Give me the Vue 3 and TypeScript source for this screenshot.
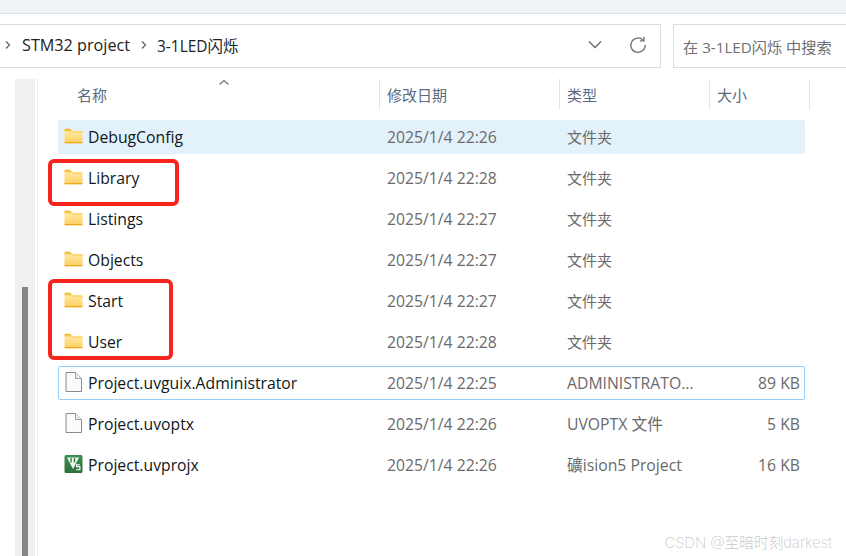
<script setup lang="ts">
interface Row { name: string; date: string; type: string; size: string; icon: 'folder' | 'file' | 'keil'; state?: string }
const rows: Row[] = [
  { name: 'DebugConfig', date: '2025/1/4 22:26', type: '文件夹', size: '', icon: 'folder', state: 'hover' },
  { name: 'Library', date: '2025/1/4 22:28', type: '文件夹', size: '', icon: 'folder' },
  { name: 'Listings', date: '2025/1/4 22:27', type: '文件夹', size: '', icon: 'folder' },
  { name: 'Objects', date: '2025/1/4 22:27', type: '文件夹', size: '', icon: 'folder' },
  { name: 'Start', date: '2025/1/4 22:27', type: '文件夹', size: '', icon: 'folder' },
  { name: 'User', date: '2025/1/4 22:28', type: '文件夹', size: '', icon: 'folder' },
  { name: 'Project.uvguix.Administrator', date: '2025/1/4 22:25', type: 'ADMINISTRATO...', size: '89 KB', icon: 'file', state: 'focus' },
  { name: 'Project.uvoptx', date: '2025/1/4 22:26', type: 'UVOPTX 文件', size: '5 KB', icon: 'file' },
  { name: 'Project.uvprojx', date: '2025/1/4 22:26', type: '礦ision5 Project', size: '16 KB', icon: 'keil' }
]
</script>

<template>
  <div class="page">
    <div class="band"></div>
    <div class="toolbar">
      <div class="address">
        <svg class="crumb" width="8" height="10" viewBox="0 0 8 10"><path d="M2 1.5 5.5 5 2 8.5" /></svg>
        <span class="path">STM32 project</span>
        <svg class="crumb gap" width="8" height="10" viewBox="0 0 8 10"><path d="M2 1.5 5.5 5 2 8.5" /></svg>
        <span class="path current">3-1LED闪烁</span>
        <span class="spacer"></span>
        <svg class="chev" width="16" height="10" viewBox="0 0 16 10"><path d="M2 1.5 8 7.5 14 1.5" /></svg>
        <svg class="refresh" width="18" height="18" viewBox="0 0 18 18"><path d="M14.2 4.2A7.2 7.2 0 1 0 16.2 9" /><path d="M15 .8V4.8H11" /></svg>
      </div>
      <div class="search">在 3-1LED闪烁 中搜索</div>
    </div>
    <div class="body">
      <div class="track"><div class="thumb"></div></div>
      <div class="rule"></div>
      <div class="list">
        <div class="head">
          <svg class="sort" width="12" height="7" viewBox="0 0 12 7"><path d="M1.5 5.5 6 1.5 10.5 5.5" /></svg>
          <div class="hcell first">名称</div>
          <div class="hcell">修改日期</div>
          <div class="hcell">类型</div>
          <div class="hcell">大小</div>
        </div>
        <div v-for="r in rows" :key="r.name" class="row" :class="r.state">
          <svg v-if="r.icon === 'folder'" class="icon" width="20" height="18" viewBox="0.5 1 20 18">
            <defs>
              <linearGradient id="fg" x1="0" y1="0" x2="0" y2="1"><stop offset="0" stop-color="#ffeaa6" /><stop offset="1" stop-color="#fdcf5f" /></linearGradient>
            </defs>
            <path d="M1 2.8C1 2.2 1.5 1.8 2.3 1.8H6.5L8.5 3.8H1Z" fill="#f3b61f" />
            <rect x="1" y="3.8" width="18" height="12.4" rx="1" fill="url(#fg)" />
            <path d="M1 15H19V15.2C19 15.8 18.6 16.2 18 16.2H2C1.4 16.2 1 15.8 1 15.2Z" fill="#eeaa1e" />
            <path d="M1 4H8.5L10 5.2H19" fill="none" stroke="#f6c445" stroke-width=".8" />
          </svg>
          <svg v-else-if="r.icon === 'file'" class="icon" width="20" height="22" viewBox="0 0 20 22">
            <path d="M2 .5H11.5L17.5 6.5V19.5H2Z" fill="#fbfbfb" stroke="#8a8a8a" />
            <path d="M11.5 .5V6.5H17.5" fill="#f0f0f0" stroke="#a0a0a0" />
          </svg>
          <svg v-else class="icon" width="20" height="20" viewBox="0.5 1 20 20">
            <defs>
              <linearGradient id="kg" x1="0" y1="0" x2="0" y2="1"><stop offset="0" stop-color="#3f8f52" /><stop offset="1" stop-color="#2b6e3c" /></linearGradient>
            </defs>
            <rect x="1" y="1" width="18" height="18" rx="1.5" fill="url(#kg)" />
            <path d="M3.5 3.5H15.5L9.5 15Z" fill="#f4f8f4" />
            <path d="M7.5 4V8.5M11 4V8.5" stroke="#2f7a40" stroke-width="1.4" />
            <path d="M12.6 15.8H16.4V12.6H13V10.8H16.4" fill="none" stroke="#fff" stroke-width="1.1" />
          </svg>
          <span class="name">{{ r.name }}</span>
          <span class="cell">{{ r.date }}</span>
          <span class="cell" :class="{ zh: r.type === '文件夹' }">{{ r.type }}</span>
          <span class="cell size">{{ r.size }}</span>
        </div>
      </div>
    </div>
    <div class="mark mark-a"></div>
    <div class="mark mark-b"></div>
    <div class="wm">CSDN @至暗时刻darkest</div>
  </div>
</template>

<style>
html, body { margin: 0; background: #fff; }
</style>

<style scoped>
.page {
  position: relative;
  width: 846px;
  height: 556px;
  overflow: hidden;
  background: #fff;
  font-family: "Open Sans", "Noto Sans CJK SC", sans-serif;
  font-size: 15.75px;
  color: #1a1a1a;
}
.band { height: 13px; background: #eef3f8; border-bottom: 1px solid #dde1e4; }
.toolbar { display: flex; gap: 12px; padding-top: 10px; height: 43px; }
.address {
  box-sizing: border-box;
  width: 661px;
  height: 44px;
  display: flex;
  align-items: center;
  border: 1px solid #dcdcdc;
  border-left: 0;
  padding-left: 4px;
  padding-bottom: 2px;
}
.crumb path, .chev path, .refresh path, .sort path { fill: none; stroke-width: 1.3; }
.crumb path { stroke: #666; }
.crumb { margin-right: 10px; }
.crumb.gap { margin-left: 10px; margin-right: 9px; }
.path { color: #222; font-size: 16.2px; }
.path.current { font-size: 15.45px; }
.spacer { flex: 1; }
.chev path { stroke: #666; }
.chev { margin-right: 26px; }
.refresh path { stroke: #707070; }
.refresh { margin-right: 13px; }
.search {
  box-sizing: border-box;
  flex: 1;
  height: 44px;
  display: flex;
  align-items: center;
  border: 1px solid #dcdcdc;
  border-right: 0;
  padding-left: 9px;
  font-size: 15.2px;
  color: #6f6f6f;
  white-space: nowrap;
}
.body { display: flex; margin-top: 12px; height: 477px; }
.track { position: relative; width: 20px; margin-left: 15px; background: #f0f0f0; }
.thumb { position: absolute; left: 7px; width: 6px; top: 208px; bottom: 0; background: #858585; }
.rule { width: 1px; margin-left: 2px; background: #f0f0f0; }
.list { position: relative; width: 747px; margin-left: 20px; }
.head {
  display: grid;
  grid-template-columns: 322px 180px 150px 100px;
  height: 31px;
  margin-bottom: 10px;
}
.sort { position: absolute; left: 160px; top: 0; }
.sort path { stroke: #777; }
.hcell {
  display: flex;
  align-items: center;
  padding-left: 7px;
  border-right: 1px solid #e4e4e4;
  color: #5a6a80;
  font-size: 15px;
  line-height: 20px;
  box-sizing: border-box;
}
.hcell.first { padding-left: 19px; }
.row {
  box-sizing: border-box;
  display: grid;
  grid-template-columns: 29px 299px 180px 1fr 95px;
  align-items: center;
  height: 34px;
  margin-bottom: 7px;
  border: 1px solid transparent;
  border-radius: 2px;
  line-height: 20px;
}
.row.hover { background: #e3f1fb; border-color: #e3f1fb; }
.row.focus { border-color: #99cdf5; }
.icon { justify-self: center; }
.name { color: #101820; white-space: nowrap; }
.cell { color: #6a6a6a; white-space: nowrap; }
.cell.zh { font-size: 15px; padding-bottom: 1px; }
.size { text-align: right; padding-right: 4px; }
.mark { position: absolute; box-sizing: border-box; border: 4px solid #f5241c; border-radius: 6px; }
.mark-a { left: 48px; top: 159px; width: 131px; height: 47px; }
.mark-b { left: 48px; top: 279px; width: 125px; height: 81px; }
.wm { position: absolute; right: 14px; top: 531px; font-size: 14.7px; font-family: "Inter", "Noto Sans CJK SC", sans-serif; font-weight: 200; color: #cacaca; white-space: nowrap; }
</style>
